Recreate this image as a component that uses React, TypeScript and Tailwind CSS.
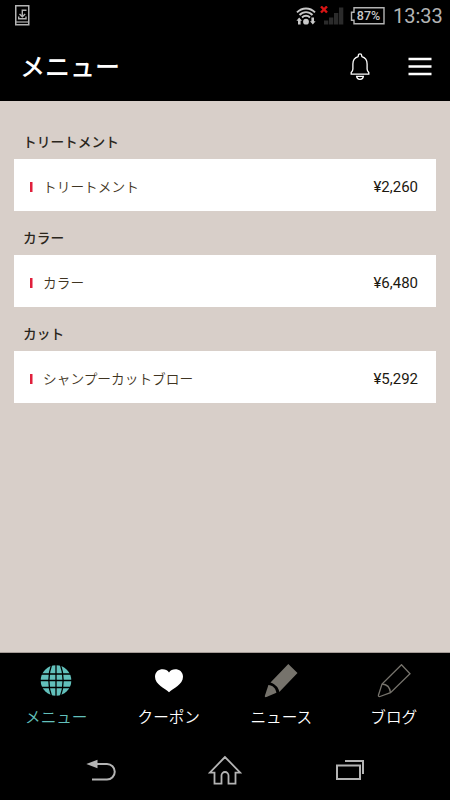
import React, { useState } from "react";

type MenuSection = { title: string; item: string; price: string };

const sections: MenuSection[] = [
  { title: "トリートメント", item: "トリートメント", price: "¥2,260" },
  { title: "カラー", item: "カラー", price: "¥6,480" },
  { title: "カット", item: "シャンプーカットブロー", price: "¥5,292" },
];

// android status bar
function StatusBar() {
  return (
    <div className="flex h-8 shrink-0 items-center pl-[15px] pr-2">
      <svg width="15" height="21" viewBox="0 0 15 21" fill="none" stroke="#b4b4b4" className="mb-[2px] shrink-0">
        <path d="M.75.75h13v19h-13z" strokeWidth="1.5" />
        <path d="M1 17h13" strokeWidth="1.2" />
        <path d="M11.5 5.2H7.3v7M4.5 9l2.8 2.8L10.2 9M3.7 11.5v2.2h7.3v-2.2" strokeWidth="1.4" />
      </svg>
      <svg width="20" height="20" viewBox="0 0 20 20" fill="none" stroke="#c8c8c8" className="ml-[266px] mb-px shrink-0">
        <path d="M1 6.4c5-5.3 13-5.3 18 0M3.5 9c3.7-3.9 9.3-3.9 13 0M6 11.5c2.3-2.3 5.7-2.3 8 0" strokeWidth="1.9" />
        <circle cx="10" cy="15.7" r="2.9" fill="#c8c8c8" stroke="none" />
        <path d="M3.2 11.5l2.8 3.2H4.6v3.8H2V14.7H.4zM16.8 18.5l-2.8-3.2h1.4v-3.8H18v3.800h1.600z" fill="#c8c8c8" stroke="none" />
      </svg>
      <svg width="24" height="20" viewBox="0 0 24 20" className="mb-px ml-[4px] shrink-0">
        <path d="M4 14.500h4.300v4H4zM9 11.500h4.300v7H9zM14 7h4.300v11.500H14zM19 1.500h4.300v17H19z" fill="#2b2b2b" />
        <path d="M1 .5l6 6M7 .5l-6 6" stroke="#d91414" strokeWidth="2.4" />
      </svg>
      <div className="relative ml-[6px] flex h-[18px] w-[35px] shrink-0 items-center justify-center">
        <svg width="35" height="18" viewBox="0 0 35 18" fill="none" className="absolute inset-0">
          <path d="M4 .7h30v16H4v-3.500H1.500v-8H4z" stroke="#b4b4b4" strokeWidth="1.4" />
        </svg>
        <span className="pl-[2px] text-[12.5px] font-medium leading-none text-[#c8c8c8]">87%</span>
      </div>
      <span className="ml-[8px] text-[20px] leading-none text-[#b4b4b4]">13:33</span>
    </div>
  );
}

function Header() {
  return (
    <header className="flex h-[69px] shrink-0 items-center pl-5 pr-[18px] text-white">
      <h1 className="pt-px text-[25px] font-medium leading-none">メニュー</h1>
      <svg width="20" height="28" viewBox="0 0 20 28" fill="none" stroke="white" strokeWidth="1.3" className="ml-auto">
        <path d="M8.3 3.7V2.5a1.7 1.7 0 0 1 3.4 0v1.2M8.3 3.7C4.5 4.700 2.900 7.500 2.900 11v5c0 1.500-.3 2.300-1.700 3.500v1.700h17.600v-1.700c-1.400-1.200-1.700-2-1.700-3.500v-5c0-3.500-1.600-6.300-5.400-7.300" />
        <path d="M6.600 23.300h6.800c-.3 4-6.500 4-6.800 0z" />
      </svg>
      <svg width="24" height="20" viewBox="0 0 24 20" className="ml-[38px]">
        <path d="M.5 2h23M.5 9.500h23M.5 17h23" stroke="white" strokeWidth="2.4" />
      </svg>
    </header>
  );
}

function GlobeIcon() {
  return (
    <svg width="32" height="32" viewBox="0 0 32 32">
      <circle cx="16" cy="15.5" r="15.3" fill="#62c0bb" />
      <path d="M1 9h30M0 15.500h32M1 22.500h30" stroke="black" strokeWidth="1.3" />
      <path d="M16 0v32M11.500 0C8 9 8 22 11.500 31M20.500 0C24 9 24 22 20.500 31" fill="none" stroke="black" strokeWidth="1.3" />
    </svg>
  );
}

function HeartIcon() {
  return (
    <svg width="32" height="32" viewBox="0 0 32 32">
      <path d="M16 27.300C12 23.500 2 19.500 2 11.800 2 3.400 12.800 2.200 16 7.500 19.200 2.200 30 3.400 30 11.800 30 19.500 20 23.500 16 27.300z" fill="white" />
    </svg>
  );
}

function PencilIcon({ filled }: { filled?: boolean }) {
  if (filled) {
    return (
      <svg width="34" height="34" viewBox="0 0 34 34" fill="#76736c">
        <path d="M24.300 0l9.200 9L15.300 28c-.5-3.800-3.300-7.500-8.800-9.500z" />
        <path d="M4.400 21c4.200.3 7 3 8 7.800L2.500 33c-1.300.4-1.900 0-1.600-1.300z" />
      </svg>
    );
  }
  return (
    <svg width="34" height="34" viewBox="0 0 34 34" fill="none" stroke="#76736c" strokeWidth="1.3">
      <path d="M24.500.7l8.500 9-19.500 19L3 32.500c-1.200.4-1.800-.2-1.500-1.500L5 20z" />
      <path d="M5 20c5 .3 8 3.500 8.500 8.700" />
    </svg>
  );
}

const tabs = [
  { label: "メニュー", icon: <GlobeIcon /> },
  { label: "クーポン", icon: <HeartIcon /> },
  { label: "ニュース", icon: <PencilIcon filled /> },
  { label: "ブログ", icon: <PencilIcon /> },
];

export default function App() {
  const [active, setActive] = useState(0);

  return (
    <div className="flex h-[800px] w-[450px] flex-col overflow-hidden bg-black font-[Roboto,'Noto_Sans_CJK_JP',sans-serif]">
      <StatusBar />
      <Header />

      <main className="flex-1 border-b border-[#a59c97] bg-[#d8cfc9] px-[14px] pt-[24px]">
        {sections.map((s) => (
          <section key={s.title}>
            <h2 className="flex h-[34px] items-center pl-[9px] pt-[2px] text-[13.7px] font-medium leading-none text-[#2a261c]">
              {s.title}
            </h2>
            <div className="mb-[9.8px] flex h-[52.3px] items-center bg-white pl-[16px] pr-[18px] pt-[4px]">
              <span className="h-[10px] w-[3px] border-l-2 border-r border-l-[#e0203c] border-r-[#f08c9c]"></span>
              <span className="ml-[10px] pt-px text-[13.7px] font-[350] leading-none text-[#3f3422]">{s.item}</span>
              <span className="ml-auto pt-px text-[15px] leading-none text-[#1c1810]">{s.price}</span>
            </div>
          </section>
        ))}
      </main>

      <nav className="grid h-[87px] shrink-0 grid-cols-4">
        {tabs.map((tab, i) => (
          <button
            key={tab.label}
            onClick={() => setActive(i)}
            className={
              "flex flex-col items-center pt-[10px] text-[15.6px] leading-none " +
              (active === i ? "text-[#62c0bb]" : "text-white")
            }
          >
            <span className="flex h-[36px] items-center">{tab.icon}</span>
            <span className="mt-[12px] font-[350]">{tab.label}</span>
          </button>
        ))}
      </nav>

      {/* android buttons */}
      <div className="flex h-[60px] shrink-0 items-center justify-between pl-[86px] pr-[85px]">
        <svg width="30" height="24" viewBox="0 0 30 24">
          <path d="M10 6h11a7.500 7.500 0 0 1 0 15.500H6" fill="none" stroke="#b4b4b4" strokeWidth="2" />
          <path d="M.3 6L11.500 1.800v8.400z" fill="#b4b4b4" />
        </svg>
        <svg width="34" height="30" viewBox="0 0 34 30" fill="none" stroke="#b4b4b4" strokeWidth="1.8" className="-ml-[2px]">
          <path d="M17 2L1.800 17.700h4.700v11h7V20.500a3.500 3.500 0 0 1 7 0v8.200h7v-11h4.700z" />
        </svg>
        <svg width="30" height="22" viewBox="0 0 30 22" fill="none" stroke="#b4b4b4" strokeWidth="2">
          <path d="M2 6.500h23V20H2zM10 2h18v13" />
        </svg>
      </div>
    </div>
  );
}
